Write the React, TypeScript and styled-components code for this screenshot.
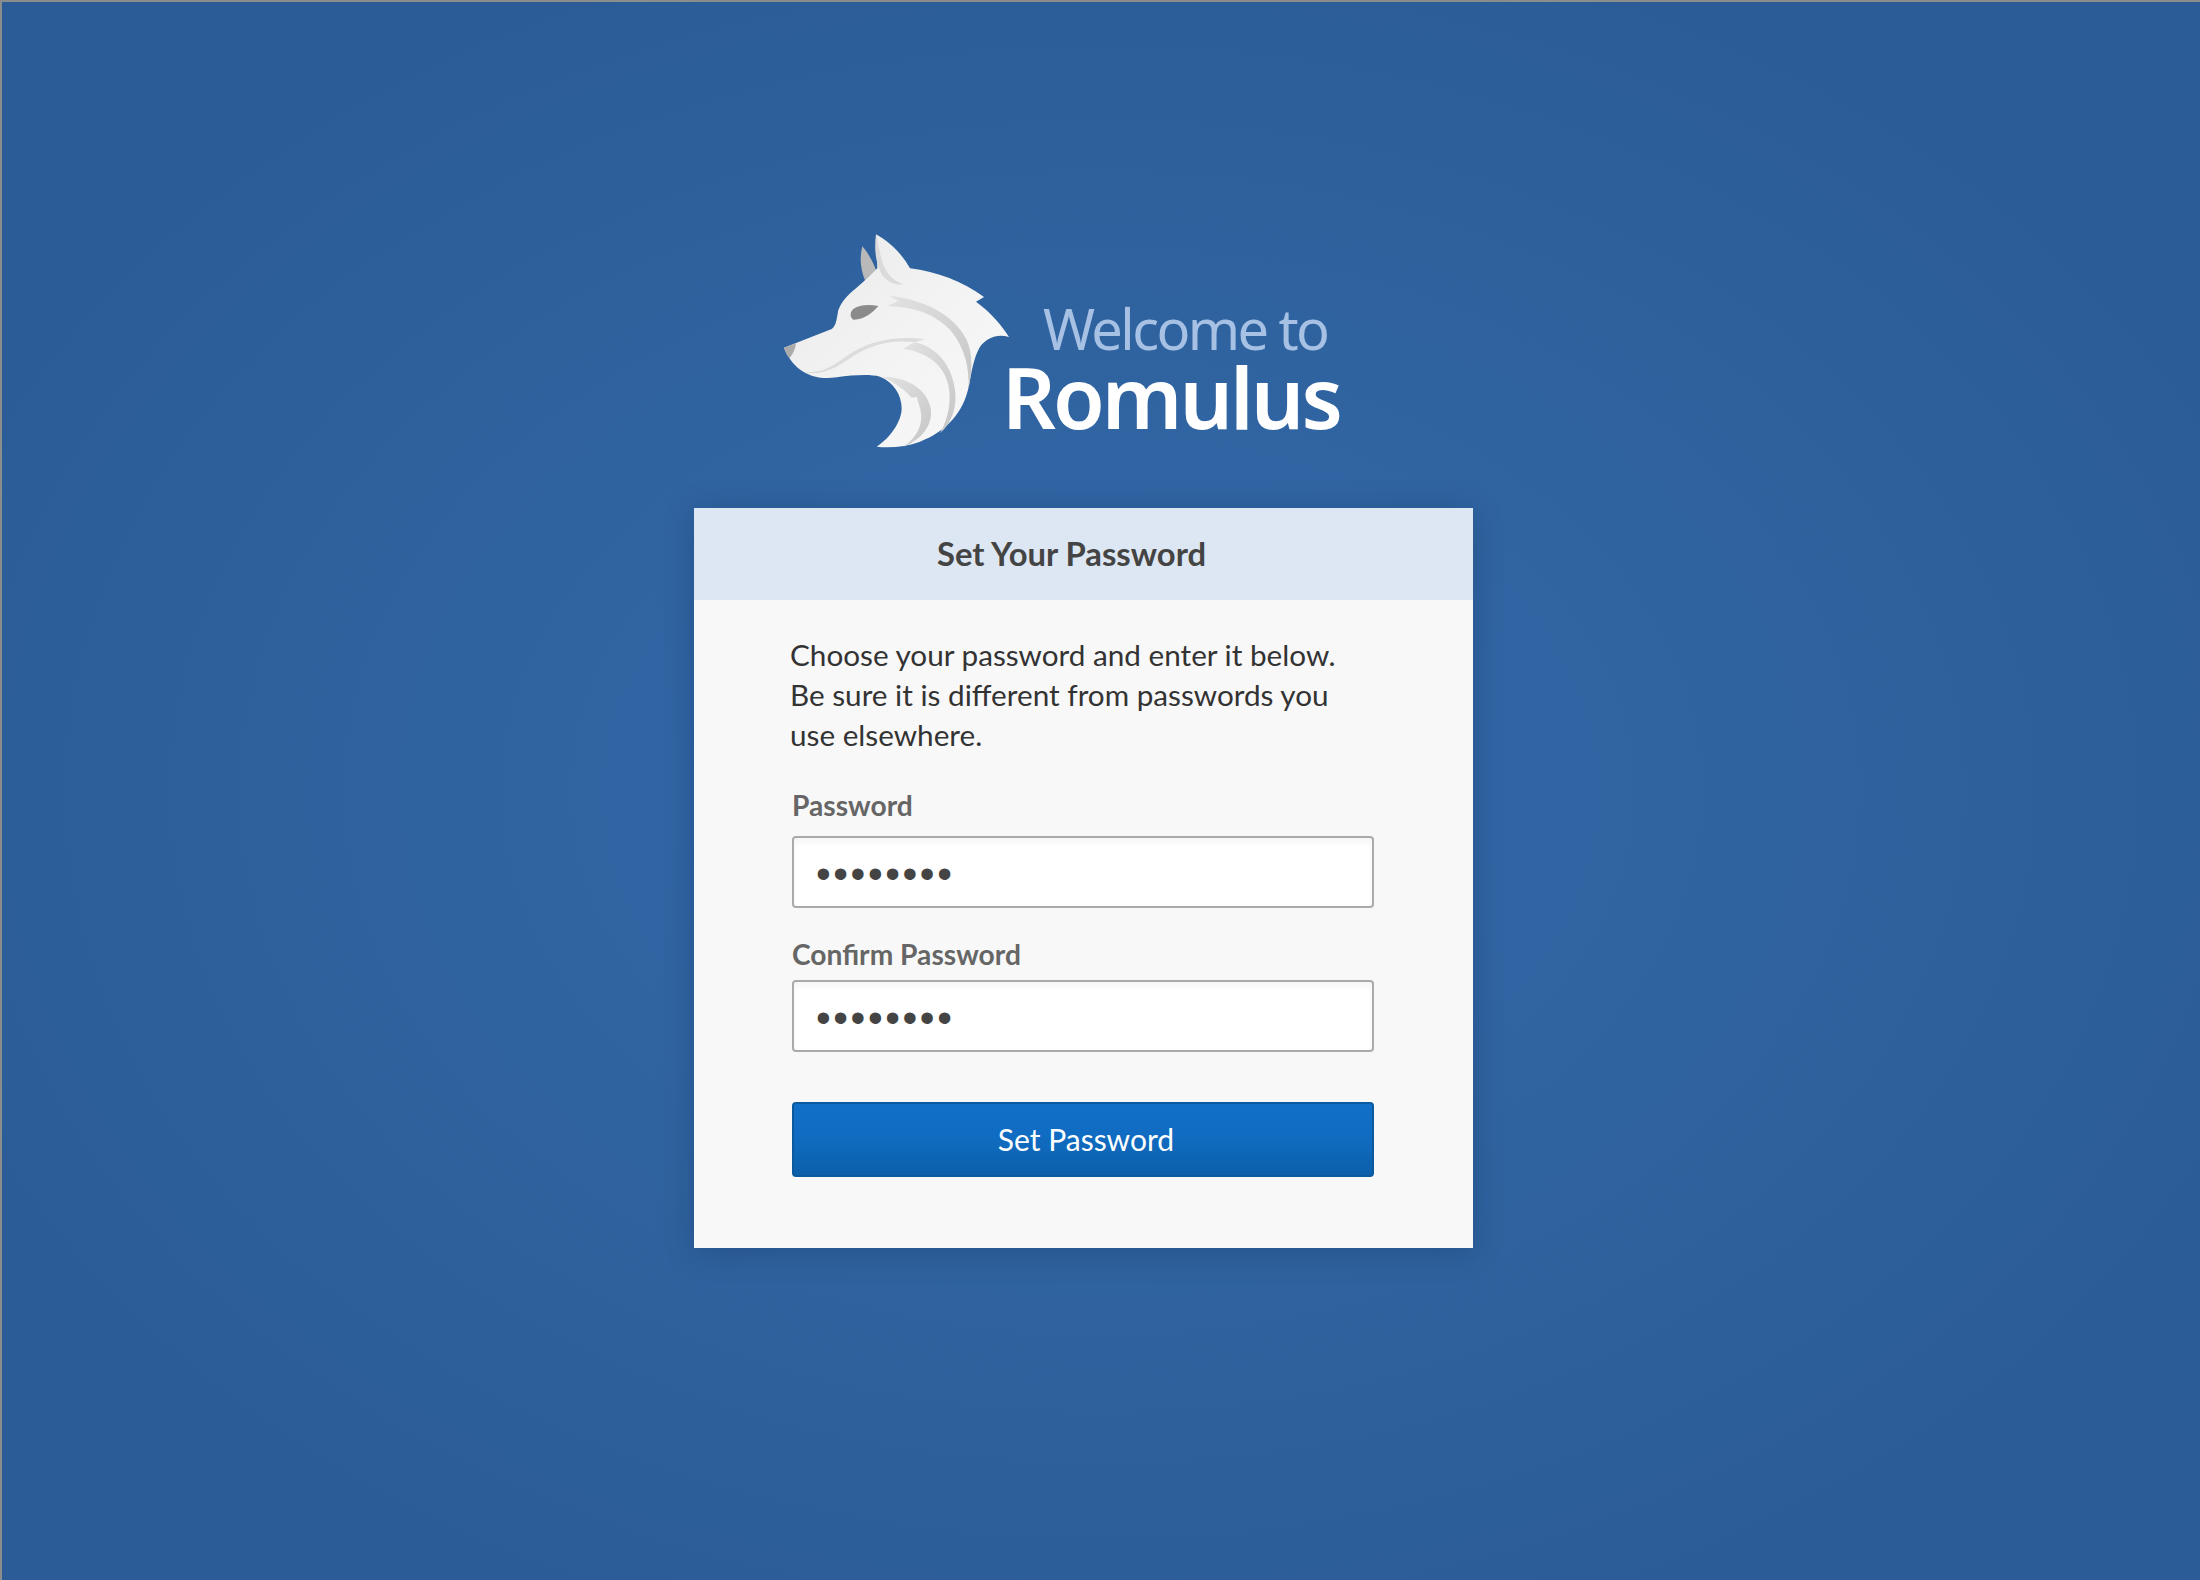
import React from 'react'
import styled, { createGlobalStyle } from 'styled-components'

const GlobalStyle = createGlobalStyle`
  html, body {
    margin: 0;
    padding: 0;
  }
  body {
    font-family: 'Lato', 'Liberation Sans', sans-serif;
  }
`

const Page = styled.main`
  box-sizing: border-box;
  width: 2200px;
  height: 1580px;
  padding: 223px 0 0 692px;
  overflow: hidden;
  border-top: 2px solid #8c8c8c;
  border-left: 2px solid #8c8c8c;
  background: radial-gradient(ellipse 1250px 900px at 1100px 790px, #3267aa 0%, #2f639f 55%, #2b5c97 100%);
`

const Column = styled.div`
  width: 779px;
`

const Brand = styled.header`
  display: flex;
  align-items: flex-start;
  margin: 0 0 53px 76px;
`

const Wolf = styled.svg`
  display: block;
  flex: none;
  width: 250px;
  height: 230px;
  margin-right: -44px;
`

const BrandText = styled.div`
  position: relative;
  padding: 76px 0 0 26px;
  font-family: 'Noto Sans', 'Open Sans', sans-serif;
`

const Welcome = styled.div`
  margin-left: 41px;
  font-size: 56px;
  line-height: 54px;
  font-weight: 400;
  letter-spacing: -2.6px;
  color: #a6c1e3;
  white-space: nowrap;
`

const ProductName = styled.div`
  font-size: 84px;
  line-height: 84px;
  font-weight: 600;
  letter-spacing: -3px;
  color: #ffffff;
  white-space: nowrap;
`

const Card = styled.section`
  background: #f8f8f8;
  box-shadow: 0 4px 28px rgba(15, 40, 80, 0.28);
`

const CardHeader = styled.h1`
  margin: 0;
  height: 92px;
  padding-right: 24px;
  background: #dde7f3;
  font-size: 32.8px;
  line-height: 92px;
  font-weight: 700;
  text-align: center;
  color: #444444;
`

const CardBody = styled.form`
  display: flex;
  flex-direction: column;
  padding: 35px 0 71px 96px;
`

const Intro = styled.p`
  margin: 0 0 35px;
  width: 600px;
  font-size: 29.7px;
  line-height: 40px;
  color: #333333;
`

const Label = styled.label<{ $gap: number; $top?: number }>`
  display: block;
  margin: ${(p) => p.$top ?? 0}px 0 ${(p) => p.$gap}px 2px;
  font-size: 28.2px;
  line-height: 30px;
  font-weight: 700;
  color: #666666;
`

const Input = styled.input`
  box-sizing: border-box;
  display: block;
  width: 582px;
  height: 72px;
  margin-left: 2px;
  padding: 3px 22px 0;
  border: 2px solid #aaaaaa;
  border-radius: 4px;
  outline: none;
  background: #ffffff;
  box-shadow: inset 0 4px 6px rgba(0, 0, 0, 0.04);
  font-family: 'Liberation Sans', sans-serif;
  font-size: 42px;
  letter-spacing: 2.6px;
  color: #444444;
`

const SubmitButton = styled.button`
  box-sizing: border-box;
  width: 582px;
  height: 75px;
  margin: 50px 0 0 2px;
  padding: 0 0 2px 6px;
  border: 2px solid #0b5a9f;
  border-radius: 4px;
  background: linear-gradient(#126fc7 0%, #106cc2 45%, #0c5fa9 100%);
  font-family: 'Lato', 'Liberation Sans', sans-serif;
  font-size: 30px;
  color: #ffffff;
`

const WolfLogo = () => (
  <Wolf viewBox="0 0 750 690">
    <defs>
      <linearGradient id="fur" x1="0" y1="0" x2="1" y2="1">
        <stop offset="0" stopColor="#e9e9e9" />
        <stop offset="0.5" stopColor="#f3f3f3" />
        <stop offset="1" stopColor="#f8f8f8" />
      </linearGradient>
      <linearGradient id="fold" x1="0" y1="0" x2="1" y2="1">
        <stop offset="0" stopColor="#e2e2e2" />
        <stop offset="1" stopColor="#c6c6c6" />
      </linearGradient>
    </defs>
    <path d="M277 64C268 100 272 135 285 166L318 135C308 108 293 82 277 64Z" fill="#b9b9b9" />
    <path
      d="M42 368L185 312C200 300 200 280 205 255C220 215 260 190 285 166L322 130L318 28C362 52 398 90 420 130C500 140 580 170 642 216L618 230C660 260 695 300 717 336C680 325 650 340 630 365C610 400 605 440 595 490C580 560 530 620 450 650C410 665 360 670 320 665C360 640 395 590 395 550C395 510 370 470 330 455C300 447 250 450 200 457C160 462 130 458 100 440C75 425 55 400 42 368Z"
      fill="url(#fur)"
    />
    <path d="M318 28C312 70 316 112 336 150C352 170 375 182 403 178C375 172 352 150 340 120C330 90 325 60 318 28Z" fill="#dadada" />
    <path d="M358 212C450 222 550 262 590 345C610 390 606 440 596 490C598 430 585 370 545 320C500 268 430 245 352 243L385 228Z" fill="url(#fold)" />
    <path d="M100 440C170 448 200 410 250 380C310 345 390 332 465 343L434 352C360 342 300 362 255 390C210 420 160 458 100 440Z" fill="#dcdcdc" />
    <path d="M398 371L434 352C500 365 545 420 555 495C562 545 545 595 510 625C535 580 545 530 535 480C522 420 470 380 398 371Z" fill="url(#fold)" />
    <path d="M335 455C410 455 470 490 482 550C490 600 455 645 400 665C445 635 465 590 447 540L440 515L425 518C400 490 370 470 335 455Z" fill="url(#fold)" />
    <path d="M243 262C250 245 280 235 325 243C310 262 280 285 250 284C243 280 240 272 243 262Z" fill="#8b8b8b" />
    <path d="M42 368L78 355C75 375 70 385 58 400C50 390 44 378 42 368Z" fill="#ababab" />
  </Wolf>
)

export default function App() {
  return (
    <>
      <GlobalStyle />
      <Page>
        <Column>
          <Brand>
            <WolfLogo />
            <BrandText>
              <Welcome>Welcome to</Welcome>
              <ProductName>Romulus</ProductName>
            </BrandText>
          </Brand>
          <Card>
            <CardHeader>Set Your Password</CardHeader>
            <CardBody>
              <Intro>
                Choose your password and enter it below.
                <br />
                Be sure it is different from passwords you
                <br />
                use elsewhere.
              </Intro>
              <Label htmlFor="password" $gap={16}>
                Password
              </Label>
              <Input id="password" type="password" readOnly defaultValue="password" />
              <Label htmlFor="confirm" $top={31} $gap={11}>
                Confirm Password
              </Label>
              <Input id="confirm" type="password" readOnly defaultValue="password" />
              <SubmitButton type="button">Set Password</SubmitButton>
            </CardBody>
          </Card>
        </Column>
      </Page>
    </>
  )
}
